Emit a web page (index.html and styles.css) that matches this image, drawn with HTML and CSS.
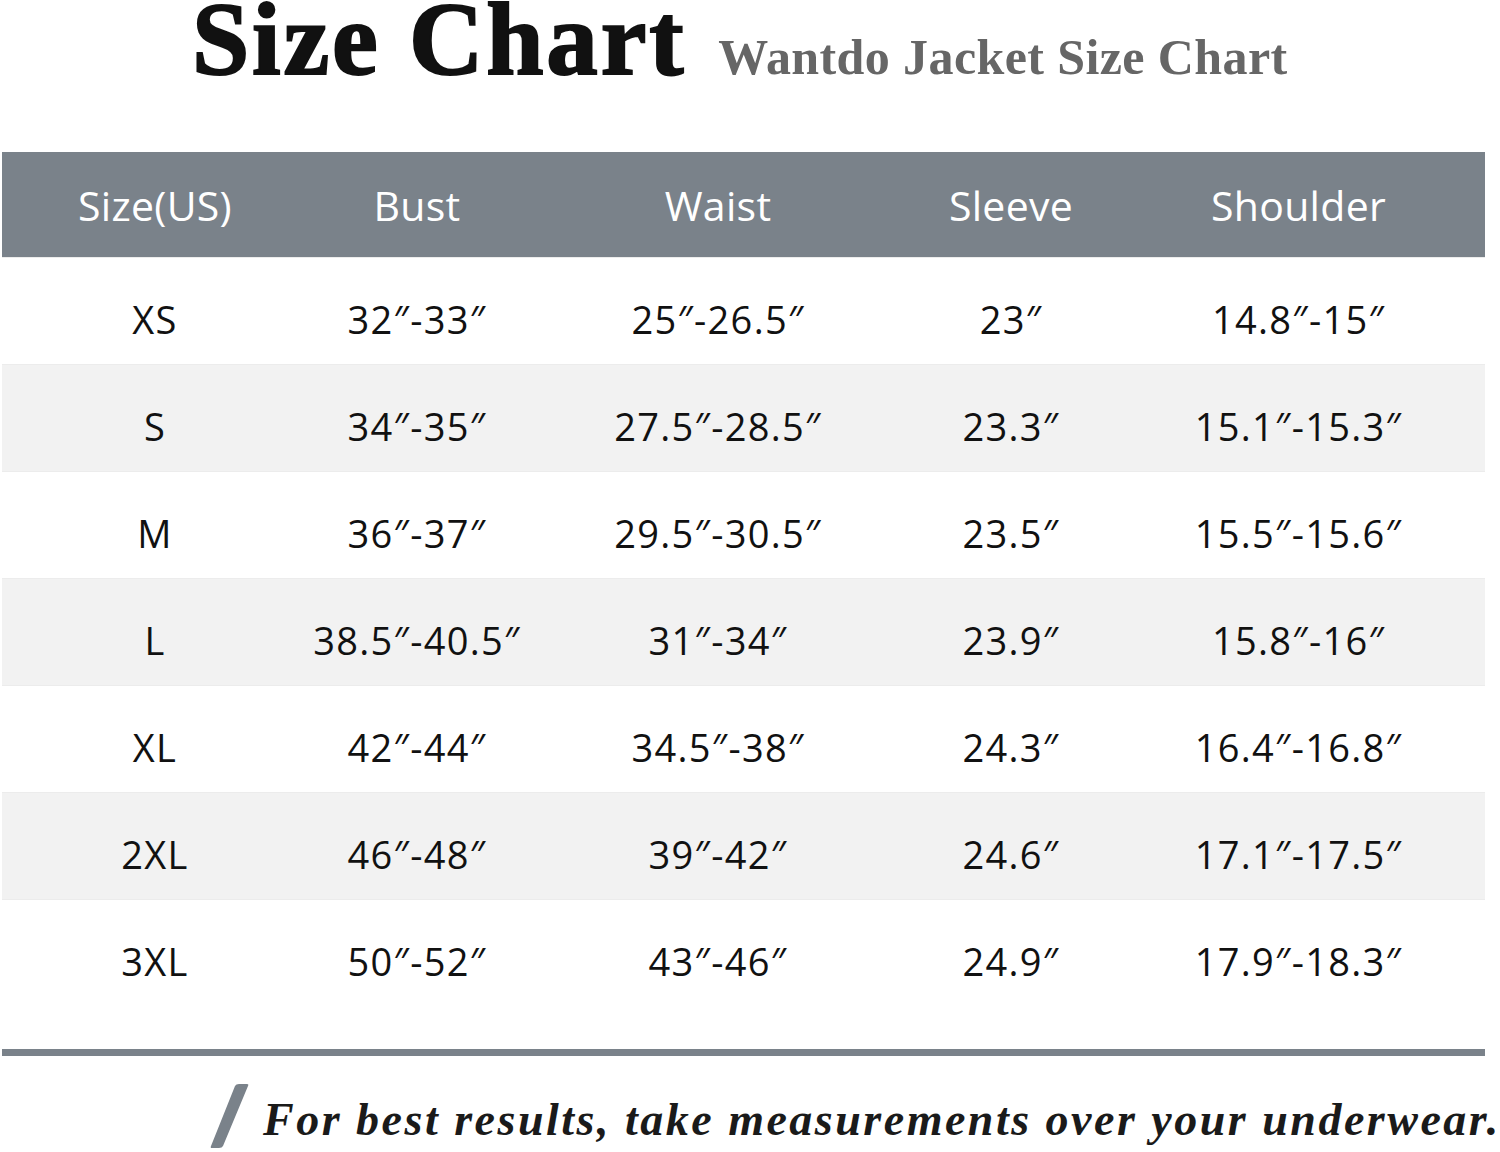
FILE: index.html
```html
<!DOCTYPE html>
<html lang="en">
<head>
<meta charset="utf-8">
<title>Size Chart</title>
<link rel="stylesheet" href="styles.css">
</head>
<body>
<div class="page">
  <header class="head">
    <h1 class="title">Size Chart</h1>
    <h2 class="subtitle">Wantdo Jacket Size Chart</h2>
  </header>
  <div class="table">
    <div class="row hrow">
      <div>Size(US)</div><div>Bust</div><div>Waist</div><div>Sleeve</div><div>Shoulder</div>
    </div>
    <div class="row">
      <div>XS</div><div>32″-33″</div><div>25″-26.5″</div><div>23″</div><div>14.8″-15″</div>
    </div>
    <div class="row alt">
      <div>S</div><div>34″-35″</div><div>27.5″-28.5″</div><div>23.3″</div><div>15.1″-15.3″</div>
    </div>
    <div class="row">
      <div>M</div><div>36″-37″</div><div>29.5″-30.5″</div><div>23.5″</div><div>15.5″-15.6″</div>
    </div>
    <div class="row alt">
      <div>L</div><div>38.5″-40.5″</div><div>31″-34″</div><div>23.9″</div><div>15.8″-16″</div>
    </div>
    <div class="row">
      <div>XL</div><div>42″-44″</div><div>34.5″-38″</div><div>24.3″</div><div>16.4″-16.8″</div>
    </div>
    <div class="row alt">
      <div>2XL</div><div>46″-48″</div><div>39″-42″</div><div>24.6″</div><div>17.1″-17.5″</div>
    </div>
    <div class="row">
      <div>3XL</div><div>50″-52″</div><div>43″-46″</div><div>24.9″</div><div>17.9″-18.3″</div>
    </div>
  </div>
  <div class="rule"></div>
  <footer class="note">
    <svg class="slash" width="44" height="68" viewBox="0 0 44 68" aria-hidden="true">
      <path d="M29 5 Q30 3 33 3 L41 3 Q43 3 42 5 L17 65 Q16 67 13 67 L6 67 Q4 67 5 65 Z" fill="#7a828a"/>
    </svg>
    <p class="note-text">For best results, take measurements over your underwear.</p>
  </footer>
</div>
</body>
</html>
```
FILE: styles.css
```css
html, body {
  margin: 0;
  padding: 0;
  background: #ffffff;
}
.page {
  width: 1500px;
  height: 1152px;
  overflow: hidden;
}
.head {
  height: 152px;
  display: flex;
  align-items: baseline;
  padding-left: 192px;
  gap: 32px;
  box-sizing: border-box;
}
.title {
  margin: 0;
  font-family: "Liberation Serif", "Times New Roman", serif;
  font-weight: 700;
  font-size: 103px;
  line-height: 78px;
  color: #111111;
  -webkit-text-stroke: 2px #111111;
  letter-spacing: 2.8px;
}
.subtitle {
  margin: 0;
  font-family: "Liberation Serif", "Times New Roman", serif;
  font-weight: 700;
  font-size: 50px;
  line-height: 78px;
  color: #666666;
  letter-spacing: 0.4px;
}
.table {
  width: 1483px;
  margin-left: 2px;
}
.row {
  display: grid;
  grid-template-columns: 306px 218px 384px 202px 373px;
  height: 107px;
  align-items: center;
  font-family: "Open Sans", "Noto Sans", "DejaVu Sans", sans-serif;
  font-size: 38px;
  letter-spacing: 1.3px;
  color: #111111;
  text-align: center;
  box-sizing: border-box;
  padding-top: 16px;
  border-top: 1px solid #ececec;
}
.row > div {
  white-space: nowrap;
}
.alt {
  background: #f2f2f2;
}
.hrow {
  height: 105px;
  background: #7a828a;
  color: #ffffff;
  font-size: 41px;
  letter-spacing: 0.3px;
  padding-top: 1px;
  border-top: none;
}
.rule {
  width: 1483px;
  height: 7px;
  margin-left: 2px;
  margin-top: 43px;
  background: #7a828a;
}
.note {
  display: flex;
  align-items: flex-end;
  padding-left: 206px;
  margin-top: 25px;
}
.slash {
  display: block;
  flex: none;
}
.note-text {
  margin: 0 0 4px 13px;
  font-family: "Liberation Serif", "Times New Roman", serif;
  font-weight: 700;
  font-style: italic;
  font-size: 46px;
  line-height: 50px;
  color: #1a1a1a;
  white-space: nowrap;
  letter-spacing: 2.5px;
}
```
